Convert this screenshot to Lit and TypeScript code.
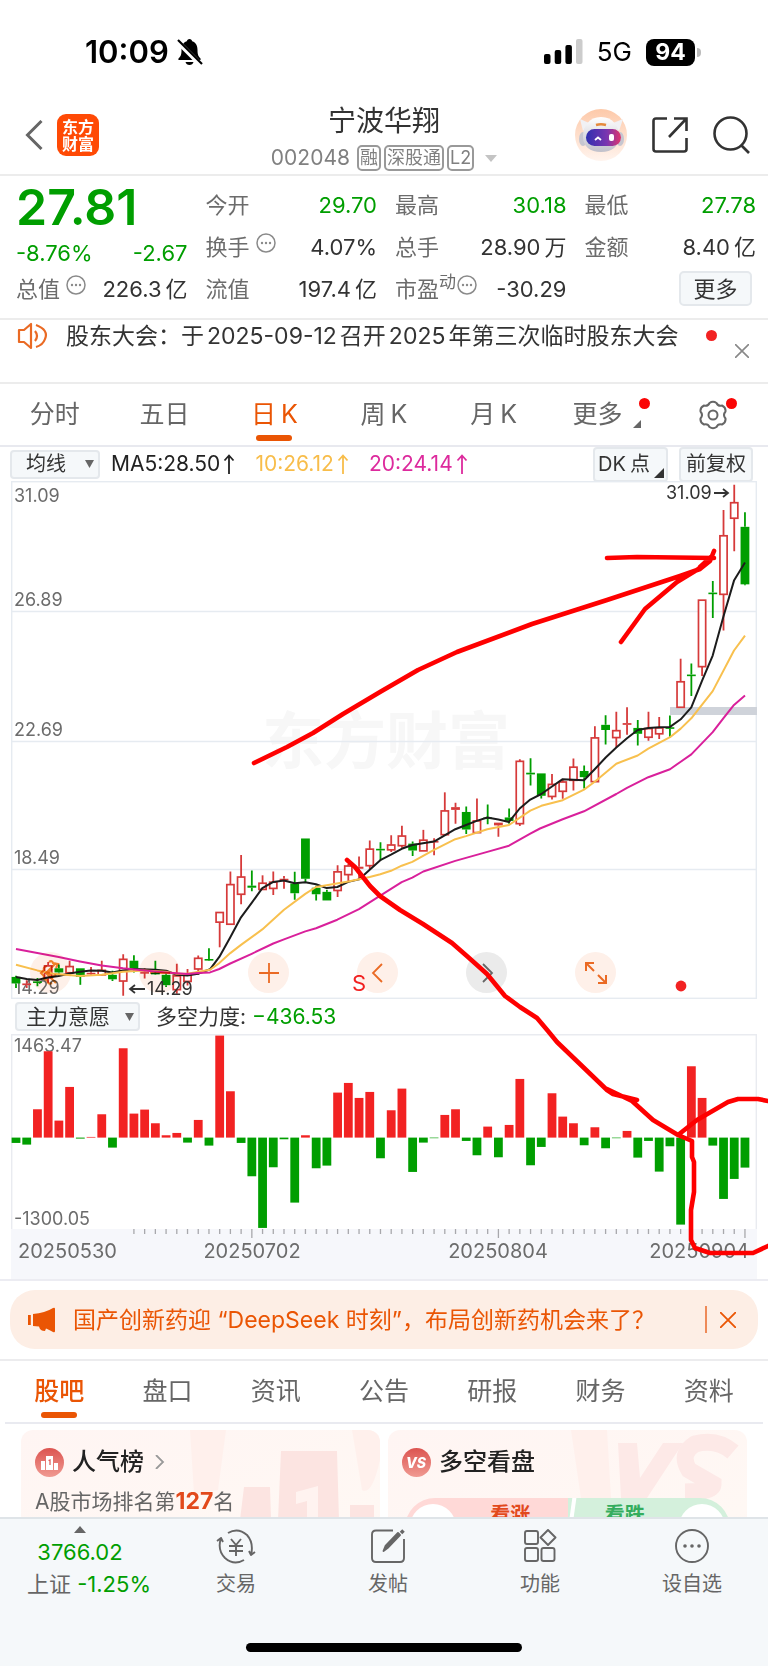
import { LitElement, html, svg, css } from "lit";
import { customElement, property, state } from "lit/decorators.js";
import { classMap } from "lit/directives/class-map.js";

type Candle = [kind: "r" | "g", high: number, top: number, bottom: number, low: number];
type Point = [number, number];

const STEP = 10.72;
const FIRST_X = 5;
const ROW_SCALE = 2.904;

/* Sessions, oldest first: high, body top, body bottom, low as depth below the top price. */
const CANDLES: Candle[] = [
  ["g", 1440, 1443, 1462, 1475], ["r", 1453, 1462, 1467, 1475], ["g", 1446, 1456, 1460, 1470],
  ["r", 1400, 1411, 1445, 1460], ["g", 1407, 1418, 1430, 1440], ["r", 1396, 1413, 1431, 1433],
  ["g", 1418, 1418, 1443, 1466], ["r", 1414, 1431, 1435, 1440], ["r", 1396, 1424, 1437, 1440],
  ["g", 1425, 1437, 1450, 1455], ["r", 1377, 1392, 1455, 1498], ["g", 1380, 1396, 1418, 1430],
  ["r", 1418, 1429, 1432, 1448], ["g", 1396, 1431, 1434, 1436], ["g", 1434, 1437, 1467, 1472],
  ["r", 1405, 1440, 1480, 1492], ["r", 1420, 1438, 1456, 1468], ["r", 1381, 1389, 1420, 1437],
  ["g", 1360, 1391, 1395, 1396], ["r", 1256, 1256, 1284, 1357], ["r", 1137, 1175, 1290, 1290],
  ["r", 1089, 1153, 1203, 1232], ["g", 1134, 1178, 1184, 1194], ["r", 1148, 1171, 1189, 1189],
  ["r", 1137, 1168, 1186, 1205], ["r", 1150, 1158, 1163, 1187], ["g", 1138, 1172, 1200, 1219],
  ["g", 1041, 1041, 1158, 1170], ["g", 1178, 1184, 1203, 1221], ["g", 1190, 1196, 1221, 1221],
  ["r", 1119, 1138, 1192, 1211], ["r", 1115, 1121, 1146, 1165], ["r", 1093, 1123, 1129, 1160],
  ["r", 1047, 1072, 1120, 1130], ["g", 1052, 1071, 1075, 1105], ["r", 1032, 1060, 1074, 1080],
  ["r", 1004, 1034, 1062, 1068], ["g", 1050, 1056, 1076, 1092], ["r", 1016, 1046, 1077, 1077],
  ["r", 1040, 1048, 1053, 1090], ["r", 907, 961, 1030, 1030], ["r", 937, 950, 958, 998],
  ["g", 948, 964, 1015, 1028], ["r", 925, 990, 1024, 1024], ["g", 942, 980, 984, 1000],
  ["r", 995, 995, 1003, 1036], ["g", 954, 980, 990, 998], ["r", 811, 817, 998, 1005],
  ["g", 808, 850, 855, 887], ["g", 852, 852, 917, 925], ["r", 854, 884, 919, 928],
  ["r", 868, 877, 904, 926], ["r", 809, 834, 872, 902], ["g", 829, 845, 863, 896],
  ["r", 715, 749, 876, 876], ["g", 683, 711, 726, 768], ["r", 673, 728, 748, 776],
  ["r", 660, 706, 711, 740], ["g", 697, 720, 737, 771], ["r", 673, 722, 747, 757],
  ["r", 688, 720, 737, 752], ["g", 684, 718, 722, 748], ["r", 519, 586, 660, 660],
  ["g", 533, 565, 569, 627], ["r", 349, 349, 542, 569], ["g", 293, 327, 331, 401],
  ["r", 87, 162, 332, 437], ["r", 14, 66, 111, 207], ["g", 94, 136, 303, 306],
];

const MA5: Point[] = [
  [48, 1443], [80, 1449], [112, 1452], [144, 1445], [176, 1440], [208, 1433], [240, 1428], [272, 1424],
  [305, 1425], [337, 1430], [369, 1424], [401, 1420], [466, 1422], [498, 1425], [530, 1437], [562, 1439],
  [594, 1434], [630, 1421], [658, 1385], [691, 1328], [723, 1270], [755, 1228], [787, 1185], [820, 1167],
  [852, 1163], [884, 1171], [916, 1168], [948, 1174], [980, 1185], [1012, 1182], [1045, 1167], [1077, 1160],
  [1109, 1132], [1141, 1104], [1173, 1088], [1205, 1071], [1237, 1060], [1269, 1055], [1302, 1050],
  [1334, 1032], [1366, 1014], [1398, 1002], [1430, 990], [1462, 980], [1495, 986], [1527, 993], [1559, 954],
  [1591, 928], [1624, 912], [1656, 890], [1688, 869], [1752, 872], [1784, 840], [1817, 806], [1849, 777],
  [1881, 750], [1913, 726], [1945, 720], [1978, 718], [2010, 717], [2042, 695], [2074, 660], [2106, 583],
  [2138, 510], [2170, 398], [2202, 292], [2235, 240],
];

const MA10: Point[] = [
  [48, 1408], [112, 1424], [160, 1434], [240, 1440], [305, 1437], [369, 1428], [433, 1424], [498, 1428],
  [530, 1434], [562, 1434], [630, 1422], [658, 1403], [691, 1374], [723, 1350], [787, 1305], [852, 1248],
  [916, 1202], [948, 1182], [980, 1177], [1045, 1166], [1109, 1153], [1141, 1145], [1173, 1135],
  [1205, 1120], [1237, 1109], [1302, 1074], [1366, 1043], [1398, 1034], [1462, 1014], [1527, 1002],
  [1591, 960], [1624, 946], [1688, 930], [1752, 899], [1784, 876], [1849, 824], [1913, 800], [1945, 780],
  [2010, 747], [2042, 722], [2074, 692], [2138, 613], [2202, 495], [2235, 452],
];

const MA20: Point[] = [
  [48, 1362], [112, 1374], [176, 1385], [240, 1398], [305, 1410], [369, 1418], [433, 1424], [498, 1430],
  [562, 1435], [594, 1432], [630, 1430], [658, 1420], [691, 1404], [755, 1376], [820, 1346], [852, 1334],
  [916, 1311], [948, 1302], [1012, 1277], [1077, 1246], [1141, 1207], [1205, 1168], [1237, 1155],
  [1270, 1137], [1366, 1106], [1462, 1080], [1527, 1062], [1591, 1027], [1620, 1012], [1688, 985],
  [1752, 962], [1849, 912], [1881, 894], [1945, 863], [2010, 840], [2042, 818], [2074, 797], [2138, 732],
  [2170, 692], [2202, 653], [2235, 626],
];

const FORCE: number[] = [
  -16, -21, 85, 259, 51, 152, -3, 2, 70, -30, 268, 72, 84, 43, 7, 14, -15, 53, -24, 306, 139, -16, -116,
  -271, -89, -5, -195, 7, -92, -84, 135, 164, 119, 137, -62, 82, 147, -103, -15, -1, 68, 85, -10, -53, 33,
  -59, 38, 176, -83, -28, 133, 63, 43, -23, 31, -32, -1, 20, -60, -10, -102, -26, -261, 214, 119, -24,
  -184, -124, -90,
];

const RED = "#d63a3a";
const GREEN = "#009e00";

const depth = (v: number) => v / ROW_SCALE - 1;
const xAt = (i: number) => FIRST_X + i * STEP;
const line = (pts: Point[]) => pts.map(([x, y]) => `${(x / 3 - 11).toFixed(1)},${depth(y).toFixed(1)}`).join(" ");

@customElement("k-line-chart")
export class KLineChart extends LitElement {
  static styles = css`
    :host { display: block; }
    svg { display: block; width: 100%; height: auto; }
    text { font-family: Inter, "Noto Sans CJK SC", sans-serif; font-size: 18px; fill: #6c6c6c; }
    .mark { fill: #333; }
    .sell { font-size: 22px; fill: #f22222; }
    .watermark { font-family: "Noto Sans CJK SC", sans-serif; font-size: 62px; font-weight: 700; fill: #f7f7f7; }
  `;

  private candle([kind, high, top, bottom, low]: Candle, i: number) {
    const x = xAt(i);
    const y0 = depth(top);
    const y1 = depth(bottom);
    const color = kind === "r" ? RED : GREEN;
    const hollow = kind === "r" && bottom - top > 8;
    return svg`
      <path d="M${x} ${depth(high)}V${y0}M${x} ${y1}V${depth(low)}" stroke=${color} stroke-width="1.8"/>
      ${hollow
        ? svg`<rect x=${x - 3.6} y=${y0} width="7.2" height=${y1 - y0} fill="#fff" stroke=${color} stroke-width="1.7"/>`
        : svg`<rect x=${x - 4.4} y=${y0} width="8.8" height=${Math.max(1.6, y1 - y0)} fill=${color}/>`}`;
  }

  render() {
    const grid: [string, number][] = [["31.09", 0], ["26.89", 130], ["22.69", 260], ["18.49", 388]];
    return html`
      <svg viewBox="0 0 746 518" role="img" aria-label="日K">
        <text class="watermark" x="251" y="283">东方财富</text>
        <g stroke="#e6ebf1" stroke-width="1.4" fill="none">
          <rect x=".7" y=".7" width="744.6" height="516.6"/>
          <path d="M0 130.5H746M0 260.5H746M0 388.5H746"/>
        </g>
        <rect x="659" y="226" width="87" height="8" fill="#cfd3da"/>
        ${grid.map(([t, y]) => svg`<text x="3" y=${y === 0 ? 21 : y - 5}>${t}</text>`)}
        <text x="3" y="513">14.29</text>
        ${CANDLES.map((c, i) => this.candle(c, i))}
        <g fill="none" stroke-width="2" stroke-linejoin="round">
          <polyline points=${line(MA5)} stroke="#1c1c1c"/>
          <polyline points=${line(MA10)} stroke="#f8c04e"/>
          <polyline points=${line(MA20)} stroke="#d9209b"/>
        </g>
        <text class="mark" x="136" y="514">14.29</text>
        <path d="M120 508H134M124 504L119 508L124 512" fill="none" stroke="#333" stroke-width="1.8"/>
        <text class="mark" x="655" y="18">31.09</text>
        <path d="M703 12H716M712 8L717 12L712 16" fill="none" stroke="#333" stroke-width="1.8"/>
        <text class="sell" x="341" y="510">S</text>
        <circle cx="670" cy="505" r="5.4" fill="#f22222"/>
      </svg>`;
  }
}

@customElement("force-chart")
export class ForceChart extends LitElement {
  static styles = css`
    :host { display: block; }
    svg { display: block; width: 100%; height: auto; }
    text { font-family: Inter, "Noto Sans CJK SC", sans-serif; font-size: 18px; fill: #6c6c6c; }
    .date { font-size: 20px; }
  `;

  render() {
    const zero = 103.6;
    const majors = [22, 45, 68];
    return html`
      <svg viewBox="0 0 746 245" role="img" aria-label="主力意愿">
        <rect y="195" width="746" height="50" fill="#f6f7fb"/>
        <path d="M.7 195V.7H745.3V195" fill="none" stroke="#e9ebf0" stroke-width="1.4"/>
        <text x="3" y="18">1463.47</text>
        <text x="3" y="191">-1300.05</text>
        ${FORCE.map((v, i) => {
          const h = Math.max(0.6, Math.abs(v) / 3);
          return svg`<rect x=${xAt(i) - 4.4} y=${v > 0 ? zero - h : zero} width="8.8" height=${h} fill=${v > 0 ? "#f22222" : GREEN}/>`;
        })}
        ${FORCE.map((_, i) =>
          i < 11 ? null : svg`<path d="M${xAt(i)} 195v${majors.includes(i) ? 9 : 5}" stroke="#a8a8ac" stroke-width="1.3"/>`)}
        <text class="date" x="7" y="224">20250530</text>
        <text class="date" x="241" y="224" text-anchor="middle">20250702</text>
        <text class="date" x="487" y="224" text-anchor="middle">20250804</text>
        <text class="date" x="738" y="224" text-anchor="end">20250904</text>
      </svg>`;
  }
}

@customElement("tab-strip")
export class TabStrip extends LitElement {
  @property({ attribute: false }) items: string[] = [];
  @property({ type: Number }) active = 0;
  @property({ type: Boolean }) gear = false;

  static styles = css`
    :host { display: block; }
    .row { display: grid; grid-template-columns: repeat(7, 1fr); height: 61px; }
    button {
      position: relative; border: 0; background: none; padding: 0; margin: 0; height: 61px;
      font: 400 25px/61px Inter, "Noto Sans CJK SC", sans-serif; color: #666; cursor: pointer;
      display: flex; justify-content: center; align-items: center; gap: 5px;
    }
    .on { color: #ea5504; }
    .strong { font-weight: 500; }
    .on::after {
      content: ""; position: absolute; left: calc(50% - 18px); bottom: 4px; width: 36px; height: 6px;
      border-radius: 3px; background: #ea5504;
    }
    .dot { position: absolute; top: 14px; width: 11px; height: 11px; border-radius: 50%; background: #fa0505; }
    .dot-more { right: 8px; }
    .dot-gear { right: 31px; }
    .corner { position: absolute; right: 17px; bottom: 17px; }
    .shift { padding-right: 12px; }
  `;

  render() {
    return html`<div class="row" role="tablist">
      ${this.items.map((t, i) => html`
        <button role="tab" aria-selected=${i === this.active}
          class=${classMap({ on: i === this.active, strong: i === this.active && !this.gear, shift: t === "更多" })}
          @click=${() => { this.active = i; }}>
          ${/K$/.test(t) ? html`<span>${t[0]}</span><span>K</span>` : t}
          ${t === "更多" ? html`<span class="dot dot-more"></span>
            <svg class="corner" width="8" height="8" viewBox="0 0 8 8"><path d="M8 0V8H0Z" fill="#666"/></svg>` : null}
        </button>`)}
      ${this.gear ? html`<button aria-label="设置">
        <svg width="30" height="30" viewBox="0 0 30 30" fill="none" stroke="#666" stroke-width="2" stroke-linejoin="round">
          <path d="M11.500 3Q15 .5 18.500 3Q20 6.500 24 5.500Q28 7.500 27.500 11.500Q24.500 15 27.500 18.500Q28 22.500 24 24.500Q20 23.500 18.500 27Q15 29.500 11.500 27Q10 23.500 6 24.500Q2 22.500 2.500 18.500Q5.500 15 2.500 11.500Q2 7.500 6 5.500Q10 6.500 11.500 3Z"/>
          <circle cx="15" cy="15" r="4.500"/>
        </svg><span class="dot dot-gear"></span></button>` : null}
    </div>`;
  }
}

@customElement("app-root")
export class AppRoot extends LitElement {
  @state() private overlay = "均线";

  static styles = css`
    :host {
      display: flex; flex-direction: column; height: 100vh; overflow: hidden; background: #fff; color: #333;
      font-family: Inter, "Noto Sans CJK SC", sans-serif; font-size: 22px; line-height: 30px;
    }
    * { box-sizing: border-box; }
    button, select { font: inherit; color: inherit; margin: 0; }
    .bare { border: 0; background: none; padding: 0; display: flex; cursor: pointer; }
    svg { display: block; flex: none; }
    .scroll { flex: 1; min-height: 0; overflow: hidden; }
    .up { color: #009e00; }
    .num { margin: 0 3px; }
    .unit { margin-left: 4px; }

    .status { display: flex; justify-content: space-between; align-items: center; height: 104px; padding: 0 67px 0 85px; color: #000; }
    .status-side { display: flex; align-items: center; }
    .clock { font-size: 31px; font-weight: 600; margin-right: 7px; }
    .net { font-size: 26px; margin: 0 14px 0 14px; }
    .battery { width: 49px; height: 27px; border-radius: 8px; background: #000; color: #fff; font-size: 23px; font-weight: 700; line-height: 27px; text-align: center; }
    .nub { width: 4px; height: 9px; margin-left: 2px; border-radius: 0 4px 4px 0; background: #bbb; }

    .head { display: grid; grid-template-columns: 1fr auto 1fr; height: 72px; padding: 0 18px; border-bottom: 2px solid #ececec; }
    .head-left { display: flex; align-items: center; gap: 14px; padding: 0 0 9px 7px; }
    .head-right { display: flex; align-items: center; justify-content: flex-end; gap: 25px; padding-bottom: 9px; }
    .brand { width: 42px; height: 42px; border-radius: 9px; background: #ff4a05; color: #fff; font: 700 16px/17px "Noto Sans CJK SC", sans-serif; display: flex; align-items: center; text-align: center; padding: 0 5px; }
    .title { text-align: center; }
    h1 { margin: 0; font-size: 28px; line-height: 34px; font-weight: 400; }
    .code { display: flex; align-items: center; justify-content: center; gap: 3px; color: #808080; font-size: 21px; line-height: 26px; margin-top: 7px; }
    .tag { border: 2px solid #999; border-radius: 5px; font-size: 18px; line-height: 22px; padding: 0 1px; }
    .code-num { margin-right: 4px; }
    .caret { margin-left: 8px; }

    .quote { display: grid; grid-template-columns: repeat(4, 1fr); column-gap: 18px; height: 144px; padding: 8px 12px 0 16px; border-bottom: 2px solid #ececec; }
    .col { display: flex; flex-direction: column; }
    .cell { display: flex; justify-content: space-between; align-items: center; height: 42px; }
    .cell-tall { height: 42px; }
    .cell-low { height: 36px; }
    .name { color: #6c6c6c; display: flex; align-items: center; }
    .name svg { margin: 0 0 8px 6px; }
    .price { font-size: 50px; line-height: 46px; font-weight: 600; margin-bottom: 5px; }
    .sup { font-size: 17px; margin-bottom: 14px; }
    .tight svg { margin-left: 1px; }
    .more { align-self: flex-end; width: 73px; height: 35px; margin: 3px 4px 0 0; padding: 0; line-height: 30px; border: 2px solid #e4e8ec; border-radius: 5px; background: #f5f8fa; }

    .news { display: flex; align-items: flex-start; height: 64px; padding: 1px 19px 0 17px; border-bottom: 2px solid #ececec; font-size: 23px; }
    .news-text { flex: 1; margin-left: 18px; white-space: nowrap; color: #333; }
    .news-dot { width: 11px; height: 11px; border-radius: 50%; background: #f22222; margin: 9px 18px 0 0; }
    .news .bare { margin-top: 22px; }
    .news svg { margin-top: 1px; }

    .charts { position: relative; border-top: 2px solid #e8e9ef; border-bottom: 2px solid #ececf2; font-size: 20px; }
    .tools { display: flex; align-items: center; height: 34px; padding: 0 15px 0 10px; }
    .tools-low { height: 35px; padding-left: 15px; font-size: 21px; }
    .pick { position: relative; display: flex; align-items: center; }
    .pick svg { position: absolute; right: 6px; pointer-events: none; }
    select { appearance: none; height: 29px; border: 2px solid #e4e8ec; border-radius: 4px; background: #f5f8fa; padding: 0 24px 0 14px; font-size: 20px; line-height: 24px; }
    .pick-high { width: 90px; }
    .pick-low { width: 125px; padding-left: 9px; font-size: 21px; }
    .ma { display: flex; align-items: center; gap: 3px; margin-left: 11px; color: #222; white-space: nowrap; font-size: 21px; }
    .ma-next { margin-left: 20px; }
    .ma10 { color: #f8bd4a; }
    .ma20 { color: #dd2a9d; }
    .tool { position: relative; height: 35px; padding: 0 3px; border: 2px solid #e4e8ec; border-radius: 4px; background: #f5f8fa; line-height: 28px; }
    .tool-dk { width: 75px; margin: 0 11px 0 auto; text-align: left; }
    .tool-dk svg { position: absolute; right: 2px; bottom: 2px; }
    .tool-fq { width: 74px; white-space: nowrap; }
    .plot { position: relative; margin: 0 11px; }
    .float { position: absolute; left: 19px; bottom: 6px; display: flex; gap: 68px; mix-blend-mode: multiply; }
    .round { width: 41px; height: 41px; border: 0; border-radius: 50%; padding: 0; background: #fef0e9; display: flex; align-items: center; justify-content: center; }
    .dim { background: #ebebeb; }
    .force-label { margin-left: 16px; }
    .force-value { margin-left: 6px; }
    .ink { position: absolute; inset: 0; width: 100%; height: 100%; pointer-events: none; }

    .ad { padding: 9px 10px 10px; border-bottom: 2px solid #ececee; }
    .ad-box { display: flex; align-items: center; height: 59px; border-radius: 25px; background: #fdeee5; color: #ea5504; padding: 0 22px 0 18px; font-size: 23px; }
    .ad-text { flex: 1; margin-left: 17px; white-space: nowrap; }
    .ad-rule { width: 2px; height: 27px; background: #ee8a58; margin-right: 13px; }
    .tabs-low { margin: 0 5px; border-bottom: 2px solid #e9eaf0; }

    .cards { display: grid; grid-template-columns: 1fr 1fr; gap: 8px; padding: 6px 21px 0; }
    .card { position: relative; height: 220px; border-radius: 12px; overflow: hidden; padding: 16px 14px; background: linear-gradient(160deg, #fff5f3, #fff8f4 60%, #ffefed); }
    .art { position: absolute; right: 0; top: 0; }
    .card-head { position: relative; display: flex; align-items: center; gap: 8px; height: 32px; }
    h2 { margin: 0; font-size: 24px; font-weight: 500; line-height: 32px; color: #222; }
    .rank { position: relative; margin: 8px 0 0; font-size: 21px; color: #666; }
    .rank-num { color: #e2491c; font-weight: 700; font-size: 23px; }
    .vote { position: relative; display: flex; height: 60px; margin: 20px 3px 0; border-radius: 30px; overflow: hidden; font-size: 20px; font-weight: 700; }
    .vote-side { flex: 1; border: 0; display: flex; align-items: flex-start; justify-content: center; position: relative; line-height: 34px; }
    .bull { background: #ffd9d7; color: #e2491c; padding: 0 0 0 48px; }
    .bear { background: #d4f0dc; color: #35ad5e; padding: 0 48px 0 0; }
    .bead { position: absolute; top: 6px; width: 46px; height: 46px; border-radius: 50%; background: #fff; }
    .bead-left { left: 5px; }
    .bead-right { right: 5px; }
    .gap { position: absolute; left: 50%; top: -4px; width: 4px; height: 70px; background: #fff; transform: rotate(8deg); z-index: 1; }

    .dock { position: relative; flex: none; display: flex; height: 149px; border-top: 2px solid #dfe4e8; background: #f5f8fa; }
    .index { width: 160px; display: flex; flex-direction: column; align-items: center; padding-top: 7px; color: #666; white-space: nowrap; }
    .index-num { line-height: 30px; margin: 4px 0 2px; }
    .index-row { padding-left: 18px; }
    .menu { flex: 1; display: grid; grid-template-columns: repeat(4, 1fr); }
    .entry { border: 0; background: none; padding: 10px 0 0; height: 90px; display: flex; flex-direction: column; align-items: center; gap: 5px; font-size: 20px; color: #666; }
    .home { position: absolute; left: 32%; right: 32%; bottom: 14px; height: 9px; border-radius: 5px; background: #000; }
  `;

  private hint() {
    return svg`<svg width="20" height="20" viewBox="0 0 20 20" fill="#8a8a8a"><circle cx="10" cy="10" r="9" fill="none" stroke="#8a8a8a" stroke-width="1.5"/><circle cx="6" cy="10" r="1.2"/><circle cx="10" cy="10" r="1.2"/><circle cx="14" cy="10" r="1.2"/></svg>`;
  }

  private cross(size: number, color: string) {
    return html`<svg width=${size} height=${size} viewBox="0 0 14 14" stroke=${color} stroke-width="1.6"><path d="M0 0L14 14M14 0L0 14"/></svg>`;
  }

  private caretDown() {
    return html`<svg width="9" height="8" viewBox="0 0 9 8"><path d="M0 0H9L4.500 8Z" fill="#666"/></svg>`;
  }

  private rise() {
    return html`<svg width="12" height="20" viewBox="0 0 12 20" fill="none" stroke="currentColor" stroke-width="1.800"><path d="M6 20V1.500M1.500 6.500L6 1.500L10.500 6.500"/></svg>`;
  }

  private header() {
    return html`
      <div class="status">
        <div class="status-side">
          <span class="clock">10:09</span>
          <svg width="27" height="28" viewBox="0 0 27 28"><path d="M13.500 1C15 1 16 2 16.200 3.300C20 4.500 21.500 8 21.500 12C21.500 17 22.500 18.500 24.500 20.500C25 21.500 24.500 22 23.500 22H3.500C2.500 22 2 21.500 2.500 20.500C4.500 18.500 5.500 17 5.500 12C5.500 8 7 4.500 10.800 3.300C11 2 12 1 13.500 1ZM9.500 24H17.500C17 26 15.500 27 13.500 27S10 26 9.500 24Z" fill="#000"/><path d="M1 3L25 27" stroke="#fff" stroke-width="5"/><path d="M2 2L26 26" stroke="#000" stroke-width="2.200"/></svg>
        </div>
        <div class="status-side">
          <svg width="39" height="26" viewBox="0 0 39 26"><rect y="15" width="6.500" height="10" rx="2"/><rect x="10.700" y="11" width="6.500" height="14" rx="2"/><rect x="21.400" y="6" width="6.500" height="19" rx="2"/><rect x="32" y="0" width="6.500" height="25" rx="2" fill="#ccc"/></svg>
          <span class="net">5G</span><span class="battery">94</span><span class="nub"></span>
        </div>
      </div>
      <header class="head">
        <div class="head-left">
          <button class="bare" aria-label="返回"><svg width="18" height="30" viewBox="0 0 18 30" fill="none" stroke="#666" stroke-width="3"><path d="M16.500 1L2.500 15L16.500 29"/></svg></button>
          <span class="brand">东方财富</span>
        </div>
        <div class="title">
          <h1>宁波华翔</h1>
          <div class="code"><span class="code-num">002048</span><span class="tag">融</span><span class="tag">深股通</span><span class="tag">L2</span>
            <svg class="caret" width="12" height="7" viewBox="0 0 12 7"><path d="M0 0H12L6 7Z" fill="#c4c4c4"/></svg></div>
        </div>
        <div class="head-right">
          <button class="bare" aria-label="助手">
            <svg width="52" height="54" viewBox="0 0 52 54">
              <defs>
                <linearGradient id="halo" x2="0" y2="1"><stop stop-color="#fdc9a9"/><stop offset="1" stop-color="#fff4ee"/></linearGradient>
                <linearGradient id="shell" x2="0" y2="1"><stop stop-color="#fff"/><stop offset="1" stop-color="#c0c0ca"/></linearGradient>
                <linearGradient id="visor"><stop stop-color="#3030b0"/><stop offset=".6" stop-color="#7a35b0"/><stop offset="1" stop-color="#e0356b"/></linearGradient>
              </defs>
              <circle cx="26" cy="27" r="26" fill="url(#halo)"/>
              <path d="M8 23L5 11L14 15ZM44 23L48 11L38 15Z" fill="#f1f1f4"/>
              <ellipse cx="8" cy="31" rx="4" ry="7" fill="#c6c6d0"/><ellipse cx="45" cy="31" rx="4" ry="7" fill="#c6c6d0"/>
              <path d="M26 9C38 9 44 18 44 29C44 38 37 44 26 44S8 38 8 29C8 18 14 9 26 9Z" fill="url(#shell)"/>
              <path d="M21 17Q26 15.500 31 17" fill="none" stroke="#e58a3c" stroke-width="2.500"/>
              <rect x="11" y="21" width="35" height="17" rx="8.500" fill="url(#visor)"/>
              <path d="M20 32L23 29.500L26 32" fill="none" stroke="#fff" stroke-width="1.800"/><rect x="34" y="26" width="5" height="7" rx="2" fill="#fff"/>
            </svg></button>
          <button class="bare" aria-label="分享"><svg width="36" height="36" viewBox="0 0 36 36" fill="none" stroke="#333" stroke-width="2.600"><path d="M15 1.500H4Q1.500 1.500 1.500 4V32Q1.500 34.500 4 34.500H32Q34.500 34.500 34.500 32V21M22 1.500H34.500V14M34.500 1.500L17 20"/></svg></button>
          <button class="bare" aria-label="搜索"><svg width="37" height="38" viewBox="0 0 37 38" fill="none" stroke="#333" stroke-width="2.600"><circle cx="17.500" cy="17.500" r="16"/><path d="M28 29L36 37"/></svg></button>
        </div>
      </header>`;
  }

  private quote() {
    return html`
      <section class="quote">
        <div class="col">
          <div class="price up">27.81</div>
          <div class="cell cell-low up"><span>-8.76%</span><span>-2.67</span></div>
          <div class="cell cell-low"><span class="name">总值${this.hint()}</span><span>226.3<span class="unit">亿</span></span></div>
        </div>
        <div class="col">
          <div class="cell"><span class="name">今开</span><span class="up">29.70</span></div>
          <div class="cell cell-tall"><span class="name">换手${this.hint()}</span><span>4.07%</span></div>
          <div class="cell"><span class="name">流值</span><span>197.4<span class="unit">亿</span></span></div>
        </div>
        <div class="col">
          <div class="cell"><span class="name">最高</span><span class="up">30.18</span></div>
          <div class="cell cell-tall"><span class="name">总手</span><span>28.90<span class="unit">万</span></span></div>
          <div class="cell"><span class="name tight">市盈<span class="sup">动</span>${this.hint()}</span><span>-30.29</span></div>
        </div>
        <div class="col">
          <div class="cell"><span class="name">最低</span><span class="up">27.78</span></div>
          <div class="cell cell-tall"><span class="name">金额</span><span>8.40<span class="unit">亿</span></span></div>
          <button class="more">更多</button>
        </div>
      </section>
      <section class="news">
        <svg width="31" height="28" viewBox="0 0 31 28" fill="none" stroke="#ea6a24" stroke-width="2.200" stroke-linejoin="round"><path d="M2 8H7L14 2V26L7 20H2Z"/><path d="M18 9Q22 14 18 19M19 3Q32 8 28 17Q26 23 19 25"/></svg>
        <span class="news-text">股东大会：于<span class="num">2025-09-12</span>召开<span class="num">2025</span>年第三次临时股东大会</span>
        <span class="news-dot"></span>
        <button class="bare" aria-label="关闭">${this.cross(14, "#888")}</button>
      </section>`;
  }

  private charts() {
    return html`
      <section class="charts">
        <div class="tools">
          <span class="pick"><select class="pick-high" aria-label="主图指标" .value=${this.overlay}
            @change=${(e: Event) => { this.overlay = (e.target as HTMLSelectElement).value; }}><option>均线</option></select>${this.caretDown()}</span>
          <span class="ma">MA5:28.50${this.rise()}</span><span class="ma ma-next ma10">10:26.12${this.rise()}</span><span class="ma ma-next ma20">20:24.14${this.rise()}</span>
          <button class="tool tool-dk">DK<span class="unit">点</span><svg width="10" height="10" viewBox="0 0 10 10"><path d="M10 0V10H0Z" fill="#333"/></svg></button>
          <button class="tool tool-fq">前复权</button>
        </div>
        <div class="plot">
          <k-line-chart></k-line-chart>
          <div class="float">
            <button class="round" aria-label="设置"><svg width="24" height="26" viewBox="0 0 24 26" fill="none" stroke="#f0802a" stroke-width="2.200"><path d="M10 2Q13 0 14 3L19 4L17 8M17 3L7 13L17 23M8 6Q4 7 5 10L2 13L5 16Q4 20 8 20Q9 25 13 23M13 9L9 13L13 17L17 15"/></svg></button>
            <button class="round" aria-label="缩小"><svg width="20" height="20" viewBox="0 0 20 20" stroke="#ea6a24" stroke-width="1.800"><path d="M0 10H20"/></svg></button>
            <button class="round" aria-label="放大"><svg width="20" height="20" viewBox="0 0 20 20" stroke="#ea6a24" stroke-width="1.800"><path d="M0 10H20M10 0V20"/></svg></button>
            <button class="round" aria-label="左移"><svg width="20" height="20" viewBox="0 0 20 20" fill="none" stroke="#ea6a24" stroke-width="1.800"><path d="M14 1L5 10L14 19"/></svg></button>
            <button class="round dim" aria-label="右移"><svg width="20" height="20" viewBox="0 0 20 20" fill="none" stroke="#666" stroke-width="1.800"><path d="M6 1L15 10L6 19"/></svg></button>
            <button class="round" aria-label="全屏"><svg width="22" height="22" viewBox="0 0 22 22" fill="none" stroke="#ea6a24" stroke-width="2"><path d="M1 9V1H9M1 1L9 9M13 21H21V13M21 21L13 13"/></svg></button>
          </div>
        </div>
        <div class="tools tools-low">
          <span class="pick"><select class="pick-low" aria-label="副图指标"><option>主力意愿</option></select>${this.caretDown()}</span>
          <span class="force-label">多空力度:</span><span class="force-value up">−436.53</span>
        </div>
        <div class="plot"><force-chart></force-chart></div>
        <svg class="ink" viewBox="0 447 768 832" preserveAspectRatio="none" fill="none" stroke="#fe0000" stroke-width="4.600" stroke-linecap="round" stroke-linejoin="round">
          <path d="M254 763L287 747L313 733L343 714L380 692L418 670L457 652L532 624L607 600L680 576L700 569L710 561L714 551M607 558L637 557L714 558M621 642L645 609L677 582L700 568L712 557M700 567L711 557"/>
          <path d="M347 860L355 867L370 886L380 896L400 910L423 924L452 943L468 957L487 974L505 996L520 1007L537 1018L548 1031L557 1042L607 1090L613 1094L637 1100M607 1089L632 1101L653 1120L678 1135L697 1120L728 1102L738 1099H758L768 1101M678 1135L692 1141V1157L694 1162V1192L691 1210V1240L695 1248L710 1253H753L768 1246"/>
        </svg>
      </section>`;
  }

  private feed() {
    return html`
      <section class="ad"><div class="ad-box">
        <svg width="28" height="26" viewBox="0 0 28 26" fill="#ea5504"><path d="M5 7Q17 6 25 1Q27 0 27 2V24Q27 26 25 25Q22 23 18 21.500L17 24Q12 24 11 19.500L5 19ZM0 8H2.800V18H0Z"/></svg>
        <span class="ad-text">国产创新药迎 “DeepSeek 时刻”，布局创新药机会来了？</span>
        <span class="ad-rule"></span>
        <button class="bare" aria-label="关闭">${this.cross(16, "#ea5504")}</button>
      </div></section>
      <tab-strip class="tabs-low" .items=${["股吧", "盘口", "资讯", "公告", "研报", "财务", "资料"]}></tab-strip>
      <section class="cards">
        <article class="card">
          <svg class="art" width="190" height="90" viewBox="0 0 190 90"><path d="M0 0H36L28 60L4 64ZM162 0H190V30Q182 66 172 60Z" fill="#fff0ec"/><path d="M91 21H147L149 90H88ZM54 57H80L81 90H50ZM160 75H184V90H160Z" fill="#fce4e1"/><path d="M106 62L128 56V90H117V71L106 74Z" fill="#fff3f0"/></svg>
          <div class="card-head">
            <svg width="29" height="29" viewBox="0 0 29 29"><defs><linearGradient id="ra" x2="0" y2="1"><stop stop-color="#dc5450"/><stop offset="1" stop-color="#f09a92"/></linearGradient></defs><circle cx="14.500" cy="14.500" r="14.500" fill="url(#ra)"/><path d="M6 13H10V22H6ZM11 8H18V22H11ZM19 15H23V22H19Z" fill="#fff"/><path d="M13.500 12.500L15 12V17" fill="none" stroke="#df5d58" stroke-width="1.300"/></svg>
            <h2>人气榜</h2>
            <svg width="14" height="14" viewBox="0 0 14 14" fill="none" stroke="#999" stroke-width="1.800"><path d="M4 0L11 7L4 14"/></svg>
          </div>
          <p class="rank">A股市场排名第<span class="rank-num">127</span>名</p>
        </article>
        <article class="card">
          <svg class="art" width="180" height="90" viewBox="0 0 180 90"><path d="M4 0H40L44 68H14Z" fill="#fff0ec"/><path d="M51 13H70L73 48L96 13H116L80 68H54Z" fill="#fde9e7"/><path d="M166 22Q150 8 128 14Q112 24 122 40L146 54Q146 62 118 62" fill="none" stroke="#fde9e7" stroke-width="17"/></svg>
          <div class="card-head">
            <svg width="29" height="29" viewBox="0 0 29 29"><defs><linearGradient id="rb" x2="0" y2="1"><stop stop-color="#dc5450"/><stop offset="1" stop-color="#f09a92"/></linearGradient></defs><circle cx="14.500" cy="14.500" r="14.500" fill="url(#rb)"/><text x="14" y="20" text-anchor="middle" font-size="14" font-weight="800" font-style="italic" fill="#fff">VS</text></svg>
            <h2>多空看盘</h2>
          </div>
          <div class="vote">
            <button class="vote-side bull"><span class="bead bead-left"></span>看涨</button>
            <span class="gap"></span>
            <button class="vote-side bear">看跌<span class="bead bead-right"></span></button>
          </div>
        </article>
      </section>`;
  }

  private dock() {
    const icon = (body: unknown) => html`<svg width="40" height="35" viewBox="0 0 40 35" fill="none" stroke="#666" stroke-width="1.900" stroke-linejoin="round">${body}</svg>`;
    return html`
      <nav class="dock">
        <div class="index">
          <svg width="12" height="7" viewBox="0 0 12 7"><path d="M6 0L12 7H0Z" fill="#666"/></svg>
          <span class="index-num up">3766.02</span><span class="index-row">上证 <span class="up">-1.25%</span></span>
        </div>
        <div class="menu">
          <button class="entry">${icon(svg`<path d="M12 4Q22-2 31 6Q38 14 35 26L39 23M35 26L33 22M28 31Q18 37 9 29Q1 21 5 9L1 12M5 9L7 13"/><path d="M15 10L20 16L25 10M13 17H27M13 22H27M20 16V27"/>`)}交易</button>
          <button class="entry">${icon(svg`<path d="M25 1.500H8Q4 1.500 4 5.500V29Q4 33 8 33H32Q36 33 36 29V10"/><path d="M15.500 22L17.500 17L30 4L32 6L19.500 19Z" fill="#666"/><path d="M33 1.500L35.500 4" stroke-width="3.500"/>`)}发帖</button>
          <button class="entry">${icon(svg`<rect x="5" y="2" width="13" height="13" rx="2"/><rect x="5" y="19" width="13" height="13" rx="2"/><rect x="21.500" y="19" width="13" height="13" rx="2"/><path d="M28 1L35.500 8.500L28 16L20.500 8.500Z"/>`)}功能</button>
          <button class="entry">${icon(svg`<circle cx="20" cy="17" r="16"/><g fill="#666" stroke="none"><circle cx="13" cy="17" r="1.800"/><circle cx="20" cy="17" r="1.800"/><circle cx="27" cy="17" r="1.800"/></g>`)}设自选</button>
        </div>
        <span class="home"></span>
      </nav>`;
  }

  render() {
    return html`
      <main class="scroll">
        ${this.header()}
        ${this.quote()}
        <tab-strip gear .active=${2} .items=${["分时", "五日", "日K", "周K", "月K", "更多"]}></tab-strip>
        ${this.charts()}
        ${this.feed()}
      </main>
      ${this.dock()}`;
  }
}
